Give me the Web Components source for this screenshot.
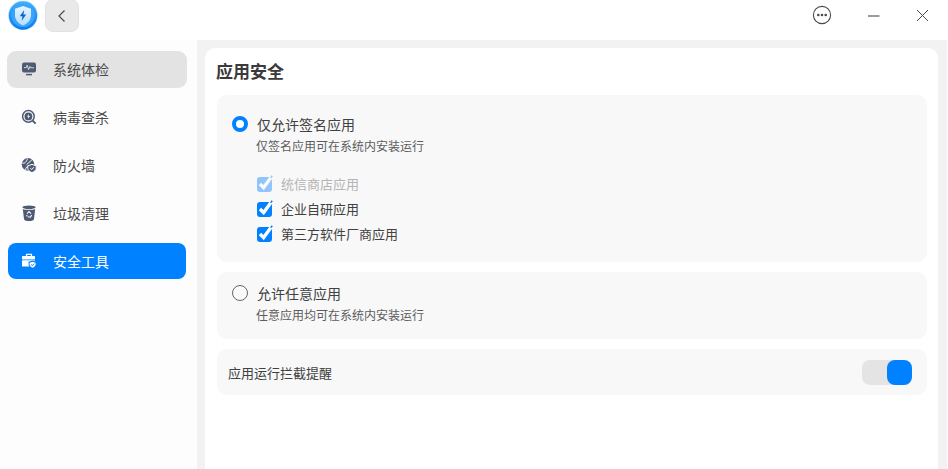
<!DOCTYPE html>
<html lang="zh">
<head>
<meta charset="utf-8">
<title>安全中心</title>
<style>
  html, body { margin: 0; height: 100%; background: #fff; overflow: hidden; }
  body { font-family: "Noto Sans CJK SC", "Noto Sans", sans-serif; color: #414141; }
</style>
</head>
<body>
<app-window>
  <app-titlebar slot="top"></app-titlebar>
  <side-nav slot="side">
    <nav-item icon="monitor" hover>系统体检</nav-item>
    <nav-item icon="scan">病毒查杀</nav-item>
    <nav-item icon="globe">防火墙</nav-item>
    <nav-item icon="bin">垃圾清理</nav-item>
    <nav-item icon="tools" active>安全工具</nav-item>
  </side-nav>
  <content-panel heading="应用安全">
    <option-card selected label="仅允许签名应用" desc="仅签名应用可在系统内安装运行">
      <check-row disabled>统信商店应用</check-row>
      <check-row>企业自研应用</check-row>
      <check-row>第三方软件厂商应用</check-row>
    </option-card>
    <option-card label="允许任意应用" desc="任意应用均可在系统内安装运行"></option-card>
    <switch-card>应用运行拦截提醒</switch-card>
  </content-panel>
</app-window>

<script>
// outer frame: titlebar on top, sidebar + panel below
class AppWindow extends HTMLElement {
  connectedCallback() {
    this.attachShadow({ mode: "open" }).innerHTML = `
      <style>
        :host { display: grid; grid-template-columns: 197px 1fr; grid-template-rows: 40px 1fr; width: 948px; height: 469px; background: #fff; }
        .top { grid-column: 1 / 3; }
        .main { background: #f2f2f2; padding: 8px 9px 0 8px; margin-right: 1px; min-height: 0; display: flex; }
      </style>
      <div class="top"><slot name="top"></slot></div>
      <slot name="side"></slot>
      <div class="main"><slot></slot></div>`;
  }
}

class AppTitlebar extends HTMLElement {
  connectedCallback() {
    this.attachShadow({ mode: "open" }).innerHTML = `
      <style>
        :host { display: flex; align-items: flex-start; height: 40px; background: #fff; }
        .logo { margin: 0 0 0 8px; width: 30px; height: 31px; flex: none; }
        .back { margin: -1px 0 0 7px; width: 34px; height: 33px; flex: none; box-sizing: border-box; background: #e9e9e9; border: 1px solid #e2e2e2; border-radius: 8px; display: flex; align-items: center; justify-content: center; }
        .space { flex: 1; }
        .btn { display: block; flex: none; }
      </style>
      <svg class="logo" viewBox="0 0 30 31">
        <defs>
          <linearGradient id="lg" x1="0" y1="0" x2="0" y2="1"><stop offset="0" stop-color="#3fb0ff"/><stop offset="1" stop-color="#0a78ee"/></linearGradient>
          <linearGradient id="sh" x1="0" y1="0" x2="0" y2="1"><stop offset="0" stop-color="#e6f5ff"/><stop offset="1" stop-color="#b4defc"/></linearGradient>
        </defs>
        <circle cx="15" cy="15.5" r="15" fill="#cfeaff"/>
        <circle cx="15" cy="15.5" r="14.2" fill="url(#lg)"/>
        <circle cx="15" cy="15.5" r="11.6" fill="#3aa4fa"/>
        <path d="M15 6 L23 8.8 V15 C23 20 19.6 23.6 15 25.6 C10.4 23.6 7 20 7 15 V8.8 Z" fill="url(#sh)"/>
        <path d="M16.2 10 L11.8 16.2 H14.5 L13.7 20.8 L18.2 14.4 H15.4 Z" fill="#0c62c8"/>
      </svg>
      <div class="back">
        <svg width="10" height="14" viewBox="0 0 10 14"><path d="M7.5 1.5 L2 7 L7.5 12.5" fill="none" stroke="#4a4a4a" stroke-width="1.2"/></svg>
      </div>
      <div class="space"></div>
      <svg class="btn" style="margin:5px 0 0 0" width="20" height="20" viewBox="0 0 20 20">
        <circle cx="10" cy="10" r="8.6" fill="none" stroke="#4a4a4a" stroke-width="1.1"/>
        <circle cx="6.3" cy="10" r="1.3" fill="#4a4a4a"/><circle cx="10" cy="10" r="1.3" fill="#4a4a4a"/><circle cx="13.7" cy="10" r="1.3" fill="#4a4a4a"/>
      </svg>
      <svg class="btn" style="margin:15px 0 0 36px" width="12" height="2" viewBox="0 0 12 2"><path d="M0 1 H11.5" stroke="#4a4a4a" stroke-width="1.1"/></svg>
      <svg class="btn" style="margin:9px 19px 0 36px" width="13" height="13" viewBox="0 0 13 13"><path d="M1 1 L12 12 M12 1 L1 12" stroke="#4a4a4a" stroke-width="1"/></svg>`;
  }
}

class SideNav extends HTMLElement {
  connectedCallback() {
    this.attachShadow({ mode: "open" }).innerHTML = `
      <style>
        :host { display: flex; flex-direction: column; gap: 12px; box-sizing: border-box; padding: 11px 11px 0 8px; background: #fdfdfd; }
      </style>
      <slot></slot>`;
  }
}

const NAV_ICONS = {
  monitor: `<rect x="1" y="1.5" width="14" height="10" rx="2" fill="currentColor"/>
    <path d="M3 6.6 H5.2 L6.2 4.2 L7.6 8.6 L9 5.4 L9.8 6.8 H13" fill="none" stroke="var(--cut)" stroke-width=".9"/>
    <path d="M5 13.6 H11" stroke="currentColor" stroke-width="1.5"/>`,
  scan: `<circle cx="7.4" cy="7.4" r="5.8" fill="none" stroke="currentColor" stroke-width="1.5"/>
    <circle cx="7.4" cy="7.4" r="3.9" fill="currentColor"/>
    <path d="M8 4.7 L6 7.8 H7.4 L6.9 10 L9 6.9 H7.6 Z" fill="var(--cut)"/>
    <path d="M11.6 11.6 L14.6 14.6" stroke="currentColor" stroke-width="2"/>`,
  globe: `<circle cx="7" cy="7.4" r="6.3" fill="currentColor"/>
    <path d="M1.2 6 C4 6.8 5.5 4.8 6.5 1.4 M5.6 7.6 L10.8 3 M4.8 13 C4.4 10.6 6 9 9 9" fill="none" stroke="var(--cut)" stroke-width="1"/>
    <path d="M11 7.4 L15.2 8.8 V11.2 C15.2 13.2 13.4 14.7 11 15.6 C8.6 14.7 6.8 13.2 6.8 11.2 V8.8 Z" fill="currentColor" stroke="var(--cut)" stroke-width="1"/>
    <path d="M9.4 11.2 L10.7 12.6 L12.8 10.2" fill="none" stroke="var(--cut)" stroke-width="1"/>`,
  bin: `<ellipse cx="8" cy="2.2" rx="6.6" ry="1.7" fill="currentColor"/>
    <path d="M1.8 3.9 C4 5.1 12 5.1 14.2 3.9 L13 14 C12.8 15.4 11 16 8 16 C5 16 3.2 15.4 3 14 Z" fill="currentColor"/>
    <path d="M6 8.6 L8 6.6 L10 8.6 M10.6 10 L9.6 12 H7 M5.6 10 L6.4 11.6" fill="none" stroke="var(--cut)" stroke-width="1.1"/>`,
  tools: `<path d="M5.5 3 V1.4 H10.5 V3" fill="none" stroke="currentColor" stroke-width="1.2"/>
    <rect x="1" y="3" width="13" height="3.4" rx=".6" fill="currentColor"/>
    <rect x="1" y="7.2" width="13" height="6.4" rx=".6" fill="currentColor"/>
    <path d="M11.6 7.4 L15.6 8.8 V11.4 C15.6 13.4 13.9 14.8 11.6 15.8 C9.3 14.8 7.6 13.4 7.6 11.4 V8.8 Z" fill="var(--cut)"/>
    <path d="M11.6 8.8 L14.6 9.8 V11.4 C14.6 12.8 13.3 13.9 11.6 14.7 C9.9 13.9 8.6 12.8 8.6 11.4 V9.8 Z" fill="currentColor"/>
    <path d="M10.1 11.5 L11.3 12.7 L13.2 10.6" fill="none" stroke="var(--cut)" stroke-width="1"/>`
};

class NavItem extends HTMLElement {
  connectedCallback() {
    const icon = NAV_ICONS[this.getAttribute("icon")];
    this.attachShadow({ mode: "open" }).innerHTML = `
      <style>
        :host { display: flex; align-items: center; gap: 16px; height: 36px; padding-left: 13px; border-radius: 8px; font-size: 14px; color: #4a4a4a; }
        :host([hover]) { background: #e3e3e3; height: 36px; padding: 0 0 1px 14px; margin: 0 -1px -1px -1px; border-radius: 9px; }
        :host([active]) { background: #0081ff; color: #fff; }
        svg { flex: none; display: block; color: #4f5a73; --cut: #fdfdfd; }
        :host([hover]) svg { --cut: #e3e3e3; }
        :host([active]) svg { color: #fff; --cut: #0081ff; }
      </style>
      <svg width="16" height="16" viewBox="0 0 16 16">${icon}</svg>
      <span><slot></slot></span>`;
  }
}

class ContentPanel extends HTMLElement {
  connectedCallback() {
    this.attachShadow({ mode: "open" }).innerHTML = `
      <style>
        :host { flex: 1; display: flex; flex-direction: column; gap: 10px; box-sizing: border-box; padding: 10px 11px 0 12px; background: #fff; border-radius: 10px 10px 0 0; }
        h1 { margin: 0 0 1px -1px; font-size: 17px; line-height: 26px; font-weight: 700; color: #3a3a3a; }
      </style>
      <h1>${this.getAttribute("heading")}</h1>
      <slot></slot>`;
  }
}

class OptionCard extends HTMLElement {
  connectedCallback() {
    this.attachShadow({ mode: "open" }).innerHTML = `
      <style>
        :host { display: grid; grid-template-columns: 16px 1fr; column-gap: 9px; padding: 11px 15px 15px; background: #f8f8f8; border-radius: 10px; }
        :host([selected]) { padding: 19px 15px 16px; }
        .radio { box-sizing: border-box; width: 16px; height: 16px; margin-top: 2px; border-radius: 50%; border: 1px solid #666; background: #fafafa; }
        :host([selected]) .radio { border: 4.5px solid #0081ff; background: #fff; }
        .title { font-size: 14px; line-height: 20px; color: #414141; }
        .desc { grid-column: 2; margin: 3px 0 0 -1px; font-size: 12px; line-height: 18px; color: #5c5c5c; }
        .list { grid-column: 2; display: flex; flex-direction: column; }
        :host([selected]) .list { margin-top: 16px; }
      </style>
      <div class="radio"></div>
      <div class="title">${this.getAttribute("label")}</div>
      <div class="desc">${this.getAttribute("desc")}</div>
      <div class="list"><slot></slot></div>`;
  }
}

class CheckRow extends HTMLElement {
  connectedCallback() {
    this.attachShadow({ mode: "open" }).innerHTML = `
      <style>
        :host { display: flex; align-items: center; gap: 8px; height: 25px; font-size: 13px; color: #414141; }
        :host([disabled]) { color: #b4b4b4; }
        svg { flex: none; display: block; }
        :host([disabled]) svg { opacity: .42; }
      </style>
      <svg width="16" height="17" viewBox="0 0 16 17">
        <rect x="0" y="2" width="15" height="15" rx="3" fill="#0081ff"/>
        <path d="M3 9 L6.6 12.6 L14 2.6" fill="none" stroke="#f8f8f8" stroke-width="3.4"/>
        <path d="M3.2 9.2 L6.6 12.3 L13.2 3.2" fill="none" stroke="#fff" stroke-width="2"/>
        <path d="M13.8 2.6 L15.2 .7" stroke="#0081ff" stroke-width="1.6"/>
      </svg>
      <span><slot></slot></span>`;
  }
}

class SwitchCard extends HTMLElement {
  connectedCallback() {
    this.attachShadow({ mode: "open" }).innerHTML = `
      <style>
        :host { display: flex; align-items: center; justify-content: space-between; height: 46px; padding: 0 15px 0 11px; background: #f8f8f8; border-radius: 10px; font-size: 13px; color: #414141; }
        .track { width: 50px; height: 25px; border-radius: 8px; background: #e4e4e4; display: flex; justify-content: flex-end; }
        .thumb { width: 25px; height: 25px; border-radius: 8px; background: #0081ff; }
      </style>
      <span><slot></slot></span>
      <div class="track"><div class="thumb"></div></div>`;
  }
}

customElements.define("app-window", AppWindow);
customElements.define("app-titlebar", AppTitlebar);
customElements.define("side-nav", SideNav);
customElements.define("nav-item", NavItem);
customElements.define("content-panel", ContentPanel);
customElements.define("option-card", OptionCard);
customElements.define("check-row", CheckRow);
customElements.define("switch-card", SwitchCard);
</script>
</body>
</html>
